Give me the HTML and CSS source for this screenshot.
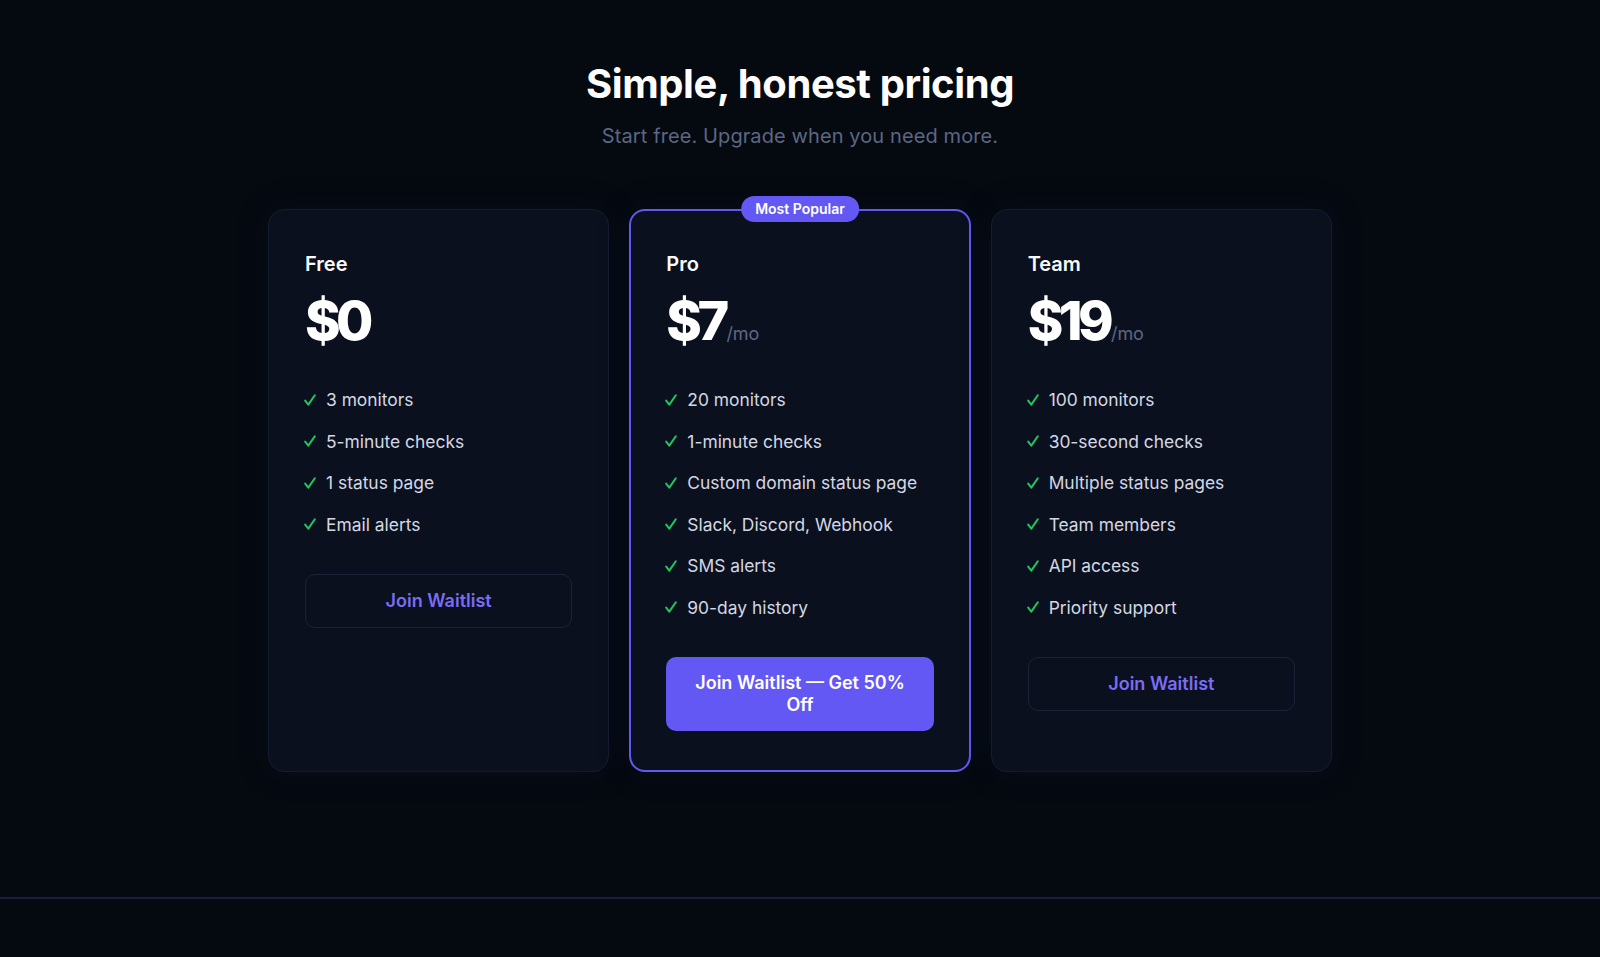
FILE: index.html
```html
<!DOCTYPE html>
<html lang="en">
<head>
<meta charset="utf-8">
<title>Pricing</title>
<link rel="stylesheet" href="styles.css">
</head>
<body>
<section class="pricing">
  <h2 class="title">Simple, honest pricing</h2>
  <p class="subtitle">Start free. Upgrade when you need more.</p>
  <div class="plans">
    <div class="card">
      <h3 class="plan-name">Free</h3>
      <div class="price"><span class="amount">$0</span></div>
      <ul class="features">
        <li><svg class="check" viewBox="0 0 12 12"><path d="M1.2 6.6 L4.3 10.6 L10.8 1.2"/></svg>3 monitors</li>
        <li><svg class="check" viewBox="0 0 12 12"><path d="M1.2 6.6 L4.3 10.6 L10.8 1.2"/></svg>5-minute checks</li>
        <li><svg class="check" viewBox="0 0 12 12"><path d="M1.2 6.6 L4.3 10.6 L10.8 1.2"/></svg>1 status page</li>
        <li><svg class="check" viewBox="0 0 12 12"><path d="M1.2 6.6 L4.3 10.6 L10.8 1.2"/></svg>Email alerts</li>
      </ul>
      <button class="btn btn-outline">Join Waitlist</button>
    </div>
    <div class="card card-popular">
      <span class="badge">Most Popular</span>
      <h3 class="plan-name">Pro</h3>
      <div class="price"><span class="amount">$7</span><span class="period">/mo</span></div>
      <ul class="features">
        <li><svg class="check" viewBox="0 0 12 12"><path d="M1.2 6.6 L4.3 10.6 L10.8 1.2"/></svg>20 monitors</li>
        <li><svg class="check" viewBox="0 0 12 12"><path d="M1.2 6.6 L4.3 10.6 L10.8 1.2"/></svg>1-minute checks</li>
        <li><svg class="check" viewBox="0 0 12 12"><path d="M1.2 6.6 L4.3 10.6 L10.8 1.2"/></svg>Custom domain status page</li>
        <li><svg class="check" viewBox="0 0 12 12"><path d="M1.2 6.6 L4.3 10.6 L10.8 1.2"/></svg>Slack, Discord, Webhook</li>
        <li><svg class="check" viewBox="0 0 12 12"><path d="M1.2 6.6 L4.3 10.6 L10.8 1.2"/></svg>SMS alerts</li>
        <li><svg class="check" viewBox="0 0 12 12"><path d="M1.2 6.6 L4.3 10.6 L10.8 1.2"/></svg>90-day history</li>
      </ul>
      <button class="btn btn-primary">Join Waitlist — Get 50% Off</button>
    </div>
    <div class="card">
      <h3 class="plan-name">Team</h3>
      <div class="price"><span class="amount">$19</span><span class="period">/mo</span></div>
      <ul class="features">
        <li><svg class="check" viewBox="0 0 12 12"><path d="M1.2 6.6 L4.3 10.6 L10.8 1.2"/></svg>100 monitors</li>
        <li><svg class="check" viewBox="0 0 12 12"><path d="M1.2 6.6 L4.3 10.6 L10.8 1.2"/></svg>30-second checks</li>
        <li><svg class="check" viewBox="0 0 12 12"><path d="M1.2 6.6 L4.3 10.6 L10.8 1.2"/></svg>Multiple status pages</li>
        <li><svg class="check" viewBox="0 0 12 12"><path d="M1.2 6.6 L4.3 10.6 L10.8 1.2"/></svg>Team members</li>
        <li><svg class="check" viewBox="0 0 12 12"><path d="M1.2 6.6 L4.3 10.6 L10.8 1.2"/></svg>API access</li>
        <li><svg class="check" viewBox="0 0 12 12"><path d="M1.2 6.6 L4.3 10.6 L10.8 1.2"/></svg>Priority support</li>
      </ul>
      <button class="btn btn-outline">Join Waitlist</button>
    </div>
  </div>
</section>
<footer class="footer"></footer>
</body>
</html>
```
FILE: styles.css
```css
* { box-sizing: border-box; }

html, body {
  margin: 0;
  padding: 0;
  background: #050910;
}

body {
  font-family: Inter, "Noto Sans", "Liberation Sans", sans-serif;
  color: #f1f5f9;
  -webkit-font-smoothing: antialiased;
}

.pricing {
  padding: 62px 0 125px;
  text-align: center;
}

.title {
  margin: 0;
  font-size: 40px;
  line-height: 1.1;
  font-weight: 700;
  letter-spacing: -0.01em;
  color: #ffffff;
}

.subtitle {
  margin: 15px 0 0;
  font-size: 20px;
  line-height: 30px;
  letter-spacing: 0.005em;
  color: #5c6784;
}

.plans {
  width: 1064px;
  margin: 58px auto 0;
  display: grid;
  grid-template-columns: repeat(3, 1fr);
  gap: 20px;
  text-align: left;
}

.card {
  position: relative;
  display: flex;
  flex-direction: column;
  align-items: stretch;
  background: #0b101f;
  border: 1px solid #161c30;
  border-radius: 16px;
  padding: 40px 36px;
  box-shadow: 0 0 30px rgba(20, 28, 50, 0.25);
}

.card-popular {
  border: 2px solid #6358f2;
  padding: 39px 35px;
}

.badge {
  position: absolute;
  top: -15px;
  left: 50%;
  transform: translateX(-50%);
  background: #6358f4;
  color: #ffffff;
  font-size: 14px;
  font-weight: 600;
  line-height: 18px;
  padding: 4px 14px;
  border-radius: 999px;
  white-space: nowrap;
}

.plan-name {
  margin: 0 0 16px;
  font-size: 20px;
  line-height: 28px;
  font-weight: 600;
  color: #f8fafc;
}

.price {
  display: flex;
  align-items: baseline;
  margin-bottom: 31px;
  line-height: 1;
}

.amount {
  font-size: 54px;
  font-weight: 800;
  letter-spacing: -0.085em;
  color: #ffffff;
}

.period {
  margin-left: 2px;
  font-size: 18px;
  color: #5c6784;
  letter-spacing: -0.01em;
}

.features {
  list-style: none;
  margin: 0 0 29px;
  padding: 0;
}

.features li {
  display: flex;
  align-items: center;
  padding: 8px 0;
  font-size: 17.4px;
  line-height: 25.5px;
  color: #d3d8e3;
}

.check {
  flex: none;
  width: 12px;
  height: 12px;
  margin: 0 10px 0 -1px;
  fill: none;
  stroke: #22c55e;
  stroke-width: 2;
  stroke-linecap: round;
  stroke-linejoin: round;
}

.btn {
  display: block;
  width: 100%;
  font-family: inherit;
  font-size: 18px;
  line-height: 21.6px;
  font-weight: 600;
  padding: 15px 24px;
  border-radius: 10px;
  cursor: pointer;
  text-align: center;
}

.btn-outline {
  background: transparent;
  border: 1px solid #1c2238;
  color: #7a6cf6;
}

.btn-primary {
  background: #6358f4;
  border: none;
  padding: 15px 24px 16px;
  color: #ffffff;
}

.footer {
  border-top: 2px solid #1b1b44;
  height: 59px;
}
```
